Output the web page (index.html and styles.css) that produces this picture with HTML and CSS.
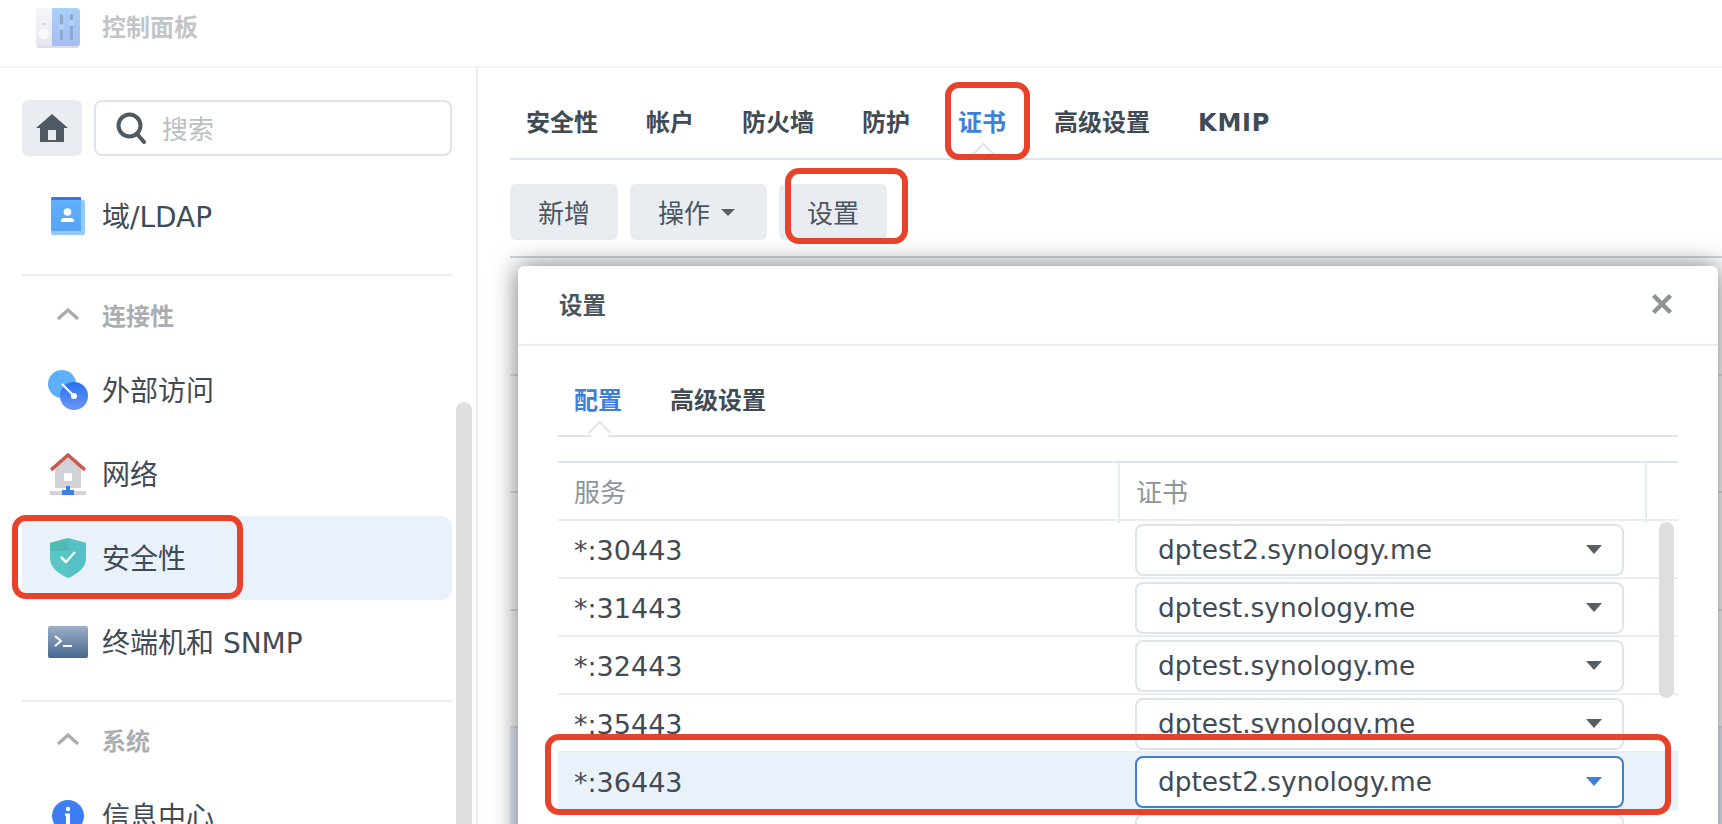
FILE: index.html
```html
<!DOCTYPE html>
<html lang="zh-CN">
<head>
<meta charset="utf-8">
<title>控制面板</title>
<link rel="stylesheet" href="styles.css">
</head>
<body>
<div class="app">
  <header class="topbar">
    <svg class="app-icon" width="44" height="40" viewBox="0 0 44 40">
      <defs>
        <linearGradient id="cpL" x1="0" y1="0" x2="0" y2="1"><stop offset="0" stop-color="#f6f6fa"/><stop offset="1" stop-color="#e4e5ef"/></linearGradient>
        <linearGradient id="cpR" x1="0" y1="0" x2="0" y2="1"><stop offset="0" stop-color="#a9d0f7"/><stop offset="1" stop-color="#a6bcf2"/></linearGradient>
      </defs>
      <rect x="0" y="1" width="44" height="39" rx="4" fill="#dcdde3"/>
      <path d="M4 0H16V38H4a4 4 0 0 1-4-4V4a4 4 0 0 1 4-4z" fill="url(#cpL)"/>
      <path d="M16 0H40a4 4 0 0 1 4 4V34a4 4 0 0 1-4 4H16z" fill="url(#cpR)"/>
      <circle cx="8" cy="26" r="5.5" fill="#fafafc"/>
      <circle cx="8" cy="16" r="1" fill="#c4c6cc"/>
      <rect x="24" y="6" width="3" height="26" rx="1.5" fill="#8fa6cf"/>
      <rect x="34" y="6" width="3" height="26" rx="1.5" fill="#8fa6cf"/>
      <circle cx="25.500" cy="19" r="3" fill="#b5d0f7"/>
      <circle cx="35.500" cy="15" r="3" fill="#b5d0f7"/>
    </svg>
    <span class="app-title">控制面板</span>
  </header>

  <div class="body">
    <aside class="sidebar">
      <div class="search-row">
        <div class="home-btn">
          <svg width="32" height="28" viewBox="0 0 32 28"><path d="M16 0L32 14H28V28H4V14H0z" fill="#4f5963"/><rect x="12" y="16" width="8" height="10" fill="#e9edf1"/></svg>
        </div>
        <div class="search-box">
          <svg width="30" height="32" viewBox="0 0 30 32"><circle cx="13.500" cy="13.500" r="11" fill="none" stroke="#4f5963" stroke-width="4"/><path d="M21 22L28 30" stroke="#4f5963" stroke-width="4" stroke-linecap="round"/></svg>
          <span class="placeholder">搜索</span>
        </div>
      </div>

      <div class="nav">
        <div class="nav-row">
          <span class="nav-icon">
            <svg width="34" height="38" viewBox="0 0 34 38">
              <defs><linearGradient id="ldap" x1="0" y1="0" x2="0" y2="1"><stop offset="0" stop-color="#62b1fb"/><stop offset="1" stop-color="#57a4f8"/></linearGradient></defs>
              <rect x="0" y="3" width="34" height="35" rx="2" fill="#93c8fb"/>
              <path d="M2 0H30V34H2a2 2 0 0 1-2-2V2a2 2 0 0 1 2-2z" fill="url(#ldap)"/>
              <path d="M2 0H29a1 1 0 0 1 1 1V3H0V2a2 2 0 0 1 2-2z" fill="#3a75e3"/>
              <circle cx="16.500" cy="15" r="3.800" fill="#fff"/>
              <path d="M10 25a3 3 0 0 1 3-4h7a3 3 0 0 1 3 4z" fill="#fff"/>
            </svg>
          </span>
          <span class="nav-text">域/LDAP</span>
        </div>
      </div>

      <div class="section">
        <div class="section-head">
          <span class="nav-icon"><svg width="24" height="14" viewBox="0 0 24 14"><path d="M2 12L12 3L22 12" fill="none" stroke="#aaadb1" stroke-width="3.500"/></svg></span>
          <span>连接性</span>
        </div>
        <div class="nav-row">
          <span class="nav-icon">
            <svg width="40" height="40" viewBox="0 0 40 40">
              <defs><linearGradient id="ext" x1="0" y1="0" x2="0" y2="1"><stop offset="0" stop-color="#2a6ff0"/><stop offset="1" stop-color="#6a98f7"/></linearGradient></defs>
              <circle cx="14" cy="14" r="14" fill="#5fb0fa"/>
              <circle cx="26" cy="26" r="14" fill="url(#ext)"/>
              <path d="M14 14L26 26" stroke="#fff" stroke-width="2"/>
              <circle cx="26" cy="26" r="3" fill="#fff"/>
            </svg>
          </span>
          <span class="nav-text">外部访问</span>
        </div>
        <div class="nav-row">
          <span class="nav-icon">
            <svg width="36" height="42" viewBox="0 0 36 42">
              <path d="M5 14L18 3L31 14V35H5z" fill="#d0d2d8"/>
              <path d="M1 17L18 2L35 17" fill="none" stroke="#c85a50" stroke-width="3.500"/>
              <rect x="14" y="20" width="8" height="8" fill="#fff"/>
              <rect x="0" y="38" width="36" height="4" fill="#d0d2d8"/>
              <path d="M16 33H20V37H24V42H12V37H16z" fill="#3e80ea"/>
            </svg>
          </span>
          <span class="nav-text">网络</span>
        </div>
        <div class="nav-row selected">
          <span class="nav-icon">
            <svg width="36" height="40" viewBox="0 0 36 40">
              <path d="M18 0L36 5V20C36 30 27 36 18 40C9 36 0 30 0 20V5z" fill="#5cc6c4"/>
              <path d="M18 0L36 5V20C36 30 27 36 18 40z" fill="#52bfc8" opacity=".7"/>
              <path d="M0 5L18 0V13H0z" fill="#4cb6a8" opacity=".7"/>
              <path d="M11 19L16 24L25 14" fill="none" stroke="#eefafa" stroke-width="2.500"/>
            </svg>
          </span>
          <span class="nav-text">安全性</span>
        </div>
        <div class="nav-row">
          <span class="nav-icon">
            <svg width="40" height="32" viewBox="0 0 40 32">
              <defs><linearGradient id="term" x1="0" y1="0" x2="0" y2="1"><stop offset="0" stop-color="#9db0c8"/><stop offset="1" stop-color="#47678c"/></linearGradient></defs>
              <rect width="40" height="32" rx="2" fill="url(#term)"/>
              <path d="M7 10L13 15L7 20" fill="none" stroke="#fff" stroke-width="2"/>
              <path d="M15 20H24" stroke="#fff" stroke-width="2"/>
            </svg>
          </span>
          <span class="nav-text">终端机和 SNMP</span>
        </div>
      </div>

      <div class="section last">
        <div class="section-head">
          <span class="nav-icon"><svg width="24" height="14" viewBox="0 0 24 14"><path d="M2 12L12 3L22 12" fill="none" stroke="#aaadb1" stroke-width="3.500"/></svg></span>
          <span>系统</span>
        </div>
        <div class="nav-row">
          <span class="nav-icon">
            <svg width="32" height="32" viewBox="0 0 32 32">
              <circle cx="16" cy="16" r="16" fill="#3d7ff2"/>
              <circle cx="16" cy="9" r="2.200" fill="#fff"/>
              <path d="M13 13.500H18V24H14V16H13z" fill="#fff"/>
            </svg>
          </span>
          <span class="nav-text">信息中心</span>
        </div>
      </div>
      <div class="side-scroll"></div>
    </aside>

    <main class="main">
      <nav class="tabs">
        <span class="tab">安全性</span>
        <span class="tab">帐户</span>
        <span class="tab">防火墙</span>
        <span class="tab">防护</span>
        <span class="tab active">证书</span>
        <span class="tab">高级设置</span>
        <span class="tab tab-latin">KMIP</span>
      </nav>
      <div class="toolbar">
        <span class="btn">新增</span>
        <span class="btn">操作<i class="btn-caret"></i></span>
        <span class="btn">设置</span>
      </div>
      <div class="cert-list">
        <div class="cert-row"></div>
        <div class="cert-row"></div>
        <div class="cert-row"></div>
        <div class="cert-row"></div>
        <div class="cert-row cert-selected"></div>
      </div>
    </main>
  </div>

  <section class="modal">
    <div class="modal-head">
      <span>设置</span>
      <svg width="22" height="22" viewBox="0 0 22 22"><path d="M2.500 2.500L19.500 19.500M19.500 2.500L2.500 19.500" stroke="#8c939a" stroke-width="4.500"/></svg>
    </div>
    <div class="modal-body">
      <nav class="modal-tabs">
        <span class="tab active">配置</span>
        <span class="tab">高级设置</span>
      </nav>
      <div class="table">
        <div class="t-head">
          <div class="th">服务</div>
          <div class="th th-sep">证书</div>
          <div class="th th-sep"></div>
        </div>
        <div class="t-row"><div class="td">*:30443</div><div class="sel"><span>dptest2.synology.me</span><i class="arrow"></i></div></div>
        <div class="t-row"><div class="td">*:31443</div><div class="sel"><span>dptest.synology.me</span><i class="arrow"></i></div></div>
        <div class="t-row"><div class="td">*:32443</div><div class="sel"><span>dptest.synology.me</span><i class="arrow"></i></div></div>
        <div class="t-row"><div class="td cut-td">*:35443</div><div class="sel"><span class="cut-sel">dptest.synology.me</span><i class="arrow"></i></div></div>
        <div class="t-row t-active"><div class="td">*:36443</div><div class="sel sel-active"><span>dptest2.synology.me</span><i class="arrow arrow-active"></i></div></div>
        <div class="t-row"><div class="td"></div><div class="sel"></div></div>
        <div class="t-scroll"></div>
      </div>
    </div>
  </section>

  <div class="mark mark-tab"></div>
  <div class="mark mark-btn"></div>
  <div class="mark mark-side"></div>
  <div class="mark mark-row"></div>
</div>
</body>
</html>
```

FILE: styles.css
```css
* { box-sizing: border-box; }
html, body { margin: 0; height: 100%; }
body {
  background: #fff;
  color: #414b55;
  font-family: "DejaVu Sans", "Noto Sans CJK SC", sans-serif;
  overflow: hidden;
}
.app { position: relative; width: 1722px; height: 824px; overflow: hidden; display: flex; flex-direction: column; }

.topbar {
  height: 68px;
  flex: none;
  display: flex;
  align-items: flex-start;
  padding: 8px 0 0 36px;
  border-bottom: 2px solid #f3f4f6;
}
.app-title { margin: 0 0 0 22px; font-size: 24px; font-weight: 700; line-height: 40px; color: #c2c5c8; }

.body { flex: 1; display: flex; min-height: 0; }

.sidebar {
  position: relative;
  width: 478px;
  flex: none;
  border-right: 2px solid #e8edf3;
  padding: 32px 24px 0 22px;
  overflow: hidden;
}
.search-row { display: flex; gap: 12px; height: 56px; }
.home-btn { width: 60px; background: #e9edf1; border-radius: 6px; display: flex; align-items: center; justify-content: center; }
.search-box {
  flex: 1;
  border: 2px solid #dde4ee;
  border-radius: 8px;
  display: flex;
  align-items: center;
  padding-left: 20px;
}
.placeholder { margin: 0 0 2px 16px; font-size: 26px; color: #bcbfc2; }

.nav { margin-top: 18px; padding-bottom: 16px; }
.nav-row {
  height: 84px;
  display: flex;
  align-items: center;
  font-size: 28px;
  border-radius: 10px;
}
.nav-text { padding-bottom: 2px; }
.nav-icon { width: 80px; flex: none; display: flex; justify-content: center; padding-left: 26px; padding-right: 14px; }
.nav-icon svg { flex: none; }
.nav-row.selected { background: #e9f1fb; }

.section { border-top: 2px solid #e8edf1; padding-bottom: 16px; }
.section-head {
  height: 72px;
  display: flex;
  align-items: center;
  padding-top: 4px;
  font-size: 24px;
  font-weight: 700;
  color: #aaadb1;
}
.section.last .section-head { padding-top: 2px; }
.section.last { padding-bottom: 0; }
.side-scroll {
  position: absolute;
  left: 456px;
  top: 334px;
  width: 16px;
  height: 500px;
  background: #dedede;
  border-radius: 8px;
}

.main { flex: 1; min-width: 0; padding-left: 32px; display: flex; flex-direction: column; }
.tabs {
  height: 92px;
  flex: none;
  display: flex;
  gap: 48px;
  align-items: flex-start;
  padding: 36px 0 0 16px;
  border-bottom: 2px solid #dde5ee;
}
.tab { position: relative; font-size: 24px; font-weight: 700; line-height: 38px; color: #414b55; }
.tab-latin { letter-spacing: .8px; }
.tab.active { color: #3f7fd6; }
.tab.active::after {
  content: "";
  position: absolute;
  left: 50%;
  bottom: -21px;
  width: 15px;
  height: 15px;
  margin-left: -7px;
  background: #fff;
  border-left: 2px solid #dde5ee;
  border-top: 2px solid #dde5ee;
  transform: rotate(45deg);
  transform-origin: center;
}
.toolbar { flex: none; display: flex; gap: 12px; padding-top: 24px; height: 98px; border-bottom: 2px solid #cfd6de; }
.btn {
  height: 56px;
  padding: 0 28px 2px;
  background: #e9edf1;
  border-radius: 6px;
  display: flex;
  align-items: center;
  font-size: 26px;
  color: #4b555f;
}
.btn-caret { margin: 2px 4px 0 11px; border: 7px solid transparent; border-top: 7px solid #565e66; border-bottom: 0; }
.cert-list { flex: 1; }
.cert-row { height: 117.500px; border-bottom: 2px solid #dfe3e8; }
.cert-selected { height: 120px; background: #e9f1fb; border: 0; }

.modal {
  position: absolute;
  left: 518px;
  top: 266px;
  width: 1200px;
  height: 640px;
  background: #fff;
  border-radius: 6px;
  box-shadow: 0 0 26px rgba(0, 0, 0, .55);
}
.modal-head {
  height: 80px;
  display: flex;
  align-items: center;
  justify-content: space-between;
  padding: 0 45px 2px 41px;
  font-size: 23.500px;
  font-weight: 700;
  color: #4b555f;
  border-bottom: 2px solid #e8edf2;
}
.modal-body { padding: 0 40px; }
.modal-tabs {
  height: 91px;
  display: flex;
  gap: 48px;
  align-items: flex-start;
  padding: 36px 0 0 16px;
  border-bottom: 2px solid #dde5ee;
}
.table { position: relative; margin-top: 24px; border-top: 2px solid #dde5ee; }
.t-head { height: 58px; display: grid; grid-template-columns: 560px 527px 33px; border-bottom: 2px solid #e8edf2; }
.th { padding-left: 16px; font-size: 26px; line-height: 60px; color: #8e959c; }
.th-sep { border-left: 2px solid #e8edf2; }
.t-row {
  height: 58px;
  display: flex;
  align-items: flex-start;
  padding-top: 3px;
  border-bottom: 2px solid #e8edf2;
}
.t-active { background: #e9f1fb; border-bottom-color: #e9f1fb; }
.td { width: 577px; flex: none; padding-left: 16px; font-size: 27px; line-height: 54px; color: #414b55; }
.cut-td { height: 38px; overflow: hidden; }
.sel {
  width: 489px;
  height: 52px;
  flex: none;
  position: relative;
  background: #fff;
  border: 2px solid #dde4ec;
  border-radius: 8px;
  padding-left: 21px;
  font-size: 26.400px;
  line-height: 48px;
  color: #414b55;
}
.sel > span { display: block; }
.cut-sel { height: 36px; overflow: hidden; }
.sel-active { border-color: #3f7fd6; }
.arrow {
  position: absolute;
  right: 20px;
  top: 19px;
  border: 8px solid transparent;
  border-top: 9px solid #565e66;
  border-bottom: 0;
}
.arrow-active { border-top-color: #3f7fd6; }
.t-scroll {
  position: absolute;
  left: 1101px;
  top: 59px;
  width: 15px;
  height: 176px;
  background: #dedede;
  border-radius: 8px;
}

.mark { position: absolute; border: 6px solid #e8432a; border-radius: 14px; }
.mark-tab { left: 945px; top: 82px; width: 85px; height: 78px; }
.mark-btn { left: 785px; top: 168px; width: 123px; height: 76px; }
.mark-side { left: 12px; top: 515px; width: 231px; height: 84px; }
.mark-row { left: 545px; top: 734px; width: 1126px; height: 81px; }
```
